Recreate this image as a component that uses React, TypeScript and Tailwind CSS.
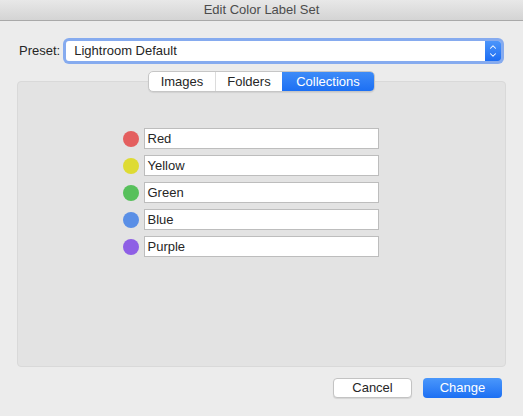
import { ChevronUp, ChevronDown } from 'lucide-react'

const labels = [
  { name: 'Red', color: 'bg-[#e45f5f]' },
  { name: 'Yellow', color: 'bg-[#dedb33]' },
  { name: 'Green', color: 'bg-[#57c05b]' },
  { name: 'Blue', color: 'bg-[#5a8fe6]' },
  { name: 'Purple', color: 'bg-[#8e5fe5]' },
]

export default function App() {
  return (
    <div className="w-[523px] h-[416px] bg-[#ececec] flex flex-col text-[13px] text-[#262626] font-['Liberation_Sans',Arial,sans-serif] overflow-hidden">
      {/* Title bar */}
      <div className="h-[21px] shrink-0 flex items-center justify-center bg-gradient-to-b from-[#e8e8e8] to-[#d4d4d4] border-b border-[#a9a9a9] text-[#4c4c4c]">
        Edit Color Label Set
      </div>

      {/* Preset row */}
      <div className="flex items-center pl-[19px] pr-[19px] mt-[17px]">
        <span className="mr-[3px]">Preset:</span>
        <div className="flex-1 rounded-[6px] p-[3px] bg-[#86abef]">
          <div className="h-[20px] flex items-stretch bg-white rounded-[3px] overflow-hidden">
            <span className="flex-1 flex items-center pl-[8px]">Lightroom Default</span>
            <div className="w-[16px] flex flex-col items-center justify-center bg-gradient-to-b from-[#4b95fb] to-[#1b6cf2] text-white">
              <ChevronUp size={10} strokeWidth={2.5} className="-mb-[2px]" />
              <ChevronDown size={10} strokeWidth={2.5} />
            </div>
          </div>
        </div>
      </div>

      {/* Tabs */}
      <div className="relative z-10 flex justify-center mt-[7px]">
        <div className="flex h-[21px] rounded-[5px] border border-[#c6c6c6] bg-white overflow-hidden shadow-[0_1px_1px_rgba(0,0,0,0.08)]">
          <div className="w-[67px] flex items-center justify-center border-r border-[#dcdcdc]">Images</div>
          <div className="w-[66px] flex items-center justify-center">Folders</div>
          <div className="w-[92px] flex items-center justify-center bg-gradient-to-b from-[#3d8bf8] to-[#1c6ff3] text-white">Collections</div>
        </div>
      </div>

      {/* Panel */}
      <div className="mx-[17px] -mt-[11px] h-[286px] rounded-[4px] bg-[#e3e3e3] border border-[#d9d9d9] flex flex-col items-center pt-[46px] gap-[6px]">
        {labels.map((l) => (
          <div key={l.name} className="flex items-center gap-[5px] -ml-[22px]">
            <div className={`w-[16px] h-[16px] rounded-full ${l.color}`} />
            <div className="w-[235px] h-[21px] bg-white border border-[#bdbdbd] flex items-center pl-[3px]">
              {l.name}
            </div>
          </div>
        ))}
      </div>

      {/* Buttons */}
      <div className="flex justify-end gap-[11px] pr-[21px] mt-[11px]">
        <button className="w-[79px] h-[20px] rounded-[4px] bg-white border border-[#c3c3c3] shadow-[0_1px_1px_rgba(0,0,0,0.1)] flex items-center justify-center">
          Cancel
        </button>
        <button className="w-[79px] h-[20px] rounded-[4px] bg-gradient-to-b from-[#4a97fb] to-[#1c6ff3] text-white flex items-center justify-center">
          Change
        </button>
      </div>
    </div>
  )
}
